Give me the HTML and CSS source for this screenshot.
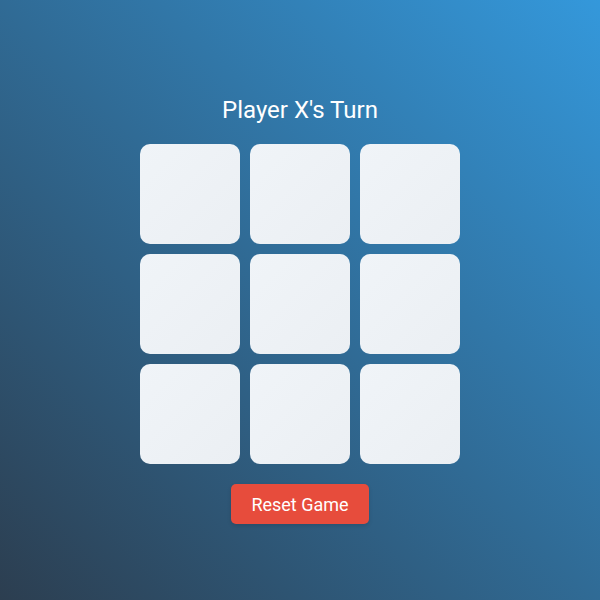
FILE: index.html
```html
<!DOCTYPE html>
<html lang="en">
<head>
<meta charset="utf-8">
<title>Tic Tac Toe</title>
<link rel="stylesheet" href="styles.css">
</head>
<body>
<main class="game">
  <h1 class="status">Player X's Turn</h1>
  <div class="board">
    <div class="cell"></div>
    <div class="cell"></div>
    <div class="cell"></div>
    <div class="cell"></div>
    <div class="cell"></div>
    <div class="cell"></div>
    <div class="cell"></div>
    <div class="cell"></div>
    <div class="cell"></div>
  </div>
  <button class="reset">Reset Game</button>
</main>
</body>
</html>
```
FILE: styles.css
```css
html, body {
  margin: 0;
  height: 100%;
}
body {
  font-family: Roboto, "Liberation Sans", sans-serif;
  background: linear-gradient(45deg, #2c3e50, #3498db);
  display: flex;
  align-items: center;
  justify-content: center;
  color: #fff;
}
.game {
  display: flex;
  flex-direction: column;
  align-items: center;
}
.status {
  font-size: 24px;
  font-weight: 400;
  line-height: 28px;
  margin: 20px 0;
}
.board {
  display: grid;
  grid-template-columns: repeat(3, 100px);
  grid-template-rows: repeat(3, 100px);
  gap: 10px;
}
.cell {
  background: linear-gradient(135deg, #f0f4f8, #ebeff3);
  border-radius: 10px;
}
.reset {
  margin-top: 20px;
  height: 40px;
  width: 138px;
  border: none;
  border-radius: 5px;
  background: #e74c3c;
  color: #fff;
  font-family: Roboto, "Liberation Sans", sans-serif;
  font-size: 18px;
  box-shadow: 0 2px 4px rgba(0, 0, 0, 0.12);
}
```
